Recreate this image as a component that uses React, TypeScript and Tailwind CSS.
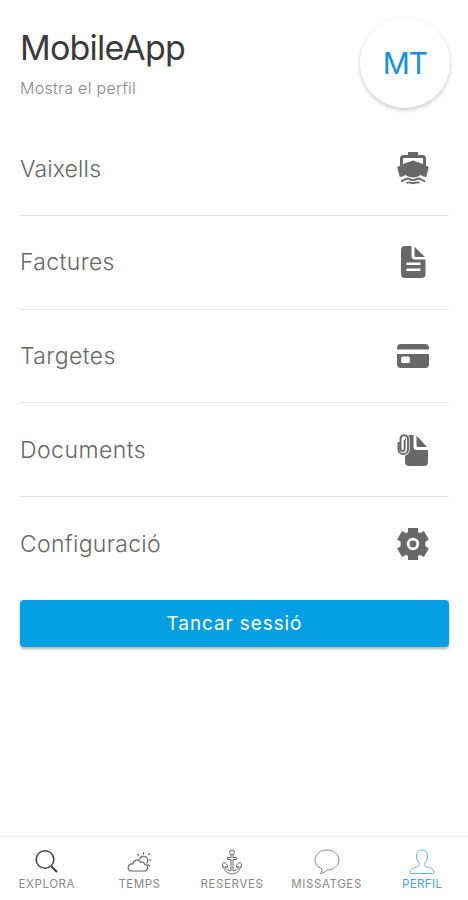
import type { ReactNode } from "react";

const menuItems: { label: string; tracking: string; icon: ReactNode }[] = [
  {
    label: "Vaixells",
    tracking: "tracking-[0.15px]",
    icon: (
      <>
        <path
          d="M11 0h10v3h4.500A3.500 3.500 0 0 1 29 6.500V13.500l2.800 1.700-2.600 9.800c-2.500 0-4-.6-5.500-2.200-4.400 3.700-11 3.700-15.400 0C6.800 24.400 5.300 25 2.800 25L.2 15.200 3 13.500V6.500A3.500 3.500 0 0 1 6.500 3H11zM6 6v6L16 8.500l10 3.500V6z"
          fillRule="evenodd"
        />
        <path
          d="M4 29c2.500.6 4-2.500 6.500-2.500 2.200 0 3.200 1.600 5.500 1.600s3.300-1.600 5.500-1.600c2.500 0 4 3.100 6.500 2.500M9.500 31c2.500-1.700 4 .2 6.500.2s4-1.900 6.500-.2"
          fill="none"
          stroke="currentColor"
          strokeWidth="1.9"
        />
      </>
    ),
  },
  {
    label: "Factures",
    tracking: "tracking-[0.35px]",
    icon: (
      <path
        d="M8 0h6.500v10a3.500 3.500 0 0 0 3.500 3.500h10.500V28a4 4 0 0 1-4 4H8a4 4 0 0 1-4-4V4a4 4 0 0 1 4-4zm9.500.7L28 11h-9a1.500 1.500 0 0 1-1.500-1.500zM9.500 16.500V19h14v-2.500zm0 6V25h14v-2.500z"
        fillRule="evenodd"
      />
    ),
  },
  {
    label: "Targetes",
    tracking: "tracking-[0.4px]",
    icon: (
      <path
        d="M4 4h24a4 4 0 0 1 4 4v1.500H0V8a4 4 0 0 1 4-4zM0 14h32v10a4 4 0 0 1-4 4H4a4 4 0 0 1-4-4zm6 2.500a2 2 0 0 0-2 2V21a2 2 0 0 0 2 2h5a2 2 0 0 0 2-2v-2.500a2 2 0 0 0-2-2z"
        fillRule="evenodd"
      />
    ),
  },
  {
    label: "Documents",
    tracking: "tracking-[0.45px]",
    icon: (
      <>
        <path d="M10 1h6.500v11.500A3.500 3.500 0 0 0 20 16h11v12a4 4 0 0 1-4 4H12a4 4 0 0 1-4-4V5z" />
        <path d="M19.500 1.500 30 13h-9a1.500 1.500 0 0 1-1.500-1.500z" />
        <path d="M1.500 8v7.500c0 6 9.500 6 9.500 0V4.500a3.800 3.800 0 0 0-7.500 0v10c0 3.500 4.200 3.500 4.200 0V6" fill="none" stroke="white" strokeWidth="3.400" />
        <path d="M1.500 8v7.500c0 6 9.500 6 9.500 0V4.500a3.800 3.800 0 0 0-7.500 0v10c0 3.500 4.200 3.500 4.200 0V6" fill="none" stroke="currentColor" strokeWidth="1.900" />
      </>
    ),
  },
  {
    label: "Configuració",
    tracking: "tracking-[0.3px]",
    icon: (
      <>
        <path
          d="M11 0h10v4l2 1.200 3.900-2.100 4.900 8.500-3.400 2.100v4.600l3.400 2.100-4.900 8.500-3.900-2.100L21 28v4H11v-4l-2-1.200-3.900 2.100-4.900-8.500 3.400-2.100v-4.600L.2 11.600l4.900-8.500L9 5.200 11 4zM16 9.800a6.200 6.200 0 1 0 0 12.400 6.200 6.200 0 0 0 0-12.400z"
          fillRule="evenodd"
        />
        <circle cx="16" cy="16" r="3.400" />
      </>
    ),
  },
];

const tabs: { label: string; icon: ReactNode; iconClass: string; labelClass: string }[] = [
  {
    label: "EXPLORA",
    iconClass: "text-[#444] -ml-0.5",
    labelClass: "text-[#888] tracking-[0.6px]",
    icon: (
      <>
        <circle cx="12" cy="10.500" r="8.800" strokeWidth="1.500" />
        <path d="m18.500 17.500 5.500 5.500" strokeWidth="2.200" />
      </>
    ),
  },
  {
    label: "TEMPS",
    iconClass: "text-[#666] -ml-0.5",
    labelClass: "text-[#888] tracking-[0.5px] -ml-0.5",
    icon: (
      <>
        <path d="M5 22h13c4.500 0 5-6 .8-6.700-.6-2-2.600-2.600-4-1.800C13 9.500 7.500 10.500 7 15c-5.500-.5-6.500 6.500-2 7z" strokeWidth="1.200" />
        <path d="M13.500 10.500a4.200 4.200 0 1 1 7 4M17.500 3v2.500m8 5.500H23m-.8-5L24 4.200M13 6.500l-1.600-1.600M22 15.500l1.800 1.700" strokeWidth="1.200" />
      </>
    ),
  },
  {
    label: "RESERVES",
    iconClass: "text-[#666] -ml-1",
    labelClass: "text-[#888] tracking-[0.6px] -ml-1",
    icon: (
      <>
        <circle cx="13" cy="3.500" r="2.500" />
        <path d="M12 6v2.500H8.500v2H12v11.300c-3-.2-5.300-1.800-5.800-4.300l2.300.8c.2-2.700-1.400-4.400-4-4.800-1.200 1.500-1.500 3-.8 4.500l1-.3C5 21.500 8.500 24.500 13 25c4.500-.5 8-3.500 8.300-7.300l1 .3c.7-1.500.4-3-.8-4.500-2.600.4-4.200 2.100-4 4.800l2.300-.8c-.5 2.500-2.800 4.100-5.800 4.300V10.500h3.500v-2H14V6" />
      </>
    ),
  },
  {
    label: "MISSATGES",
    iconClass: "text-[#888] -ml-0.5",
    labelClass: "text-[#888] tracking-[0.6px] -ml-0.5",
    icon: (
      <path d="M6.500 24.500c1.500-1.700 2-3.400 1.300-4.800C3.300 18 1 14.800 1 11 1 5.400 6.300 1 13 1s12 4.400 12 10-5.300 10-12 10c-2 2-4 3.200-6.500 3.500z" />
    ),
  },
  {
    label: "PERFIL",
    iconClass: "text-[#61afe8] ml-0.5",
    labelClass: "text-[#43a2e6] tracking-[0.4px] ml-0.5",
    icon: (
      <path d="M13 1c-3.300 0-5.500 2.200-5.500 5.500 0 4 .8 5.800 2.800 8 .5 1.700-.2 2.600-1.800 3.200C4.500 19.200 1 19.500 1 23.500c0 .8.500 1 1.500 1h21c1 0 1.500-.2 1.500-1 0-4-3.500-4.300-7.500-5.800-1.600-.6-2.300-1.500-1.800-3.200 2-2.200 2.800-4 2.800-8C18.500 3.200 16.300 1 13 1z" />
    ),
  },
];

function ProfileHeader() {
  return (
    <header className="flex h-[122px] shrink-0 justify-between pt-[18px] pr-[18px] pl-5">
      <div className="pt-[10px]">
        <h1 className="text-[34px] leading-10 tracking-[-0.8px] text-[#3a3a3a]">MobileApp</h1>
        <p className="mt-[10px] text-[16px] leading-5 font-light tracking-[0.3px] text-[#888]">Mostra el perfil</p>
      </div>
      <div className="flex size-[90px] items-center justify-center rounded-full bg-white text-[30px] tracking-[-1px] text-[#1492d8] shadow-[0_2px_4px_rgba(0,0,0,0.22)]">
        MT
      </div>
    </header>
  );
}

export default function App() {
  return (
    <div className="flex h-screen w-full flex-col overflow-hidden bg-white font-['Inter',sans-serif]">
      <ProfileHeader />
      <main className="flex-1 px-5 pr-[19px]">
        <ul>
          {menuItems.map((item) => (
            <li
              key={item.label}
              className="flex h-[93.75px] items-center justify-between border-b border-[#e2e2e2] pr-5 last:border-b-0"
            >
              <span className={`pt-px text-[23px] font-light text-[#666] ${item.tracking}`}>{item.label}</span>
              <svg viewBox="0 0 32 32" className="size-8 overflow-visible text-[#686868]" fill="currentColor">
                {item.icon}
              </svg>
            </li>
          ))}
        </ul>
        <button className="mt-[9px] flex h-[47px] w-full items-center justify-center rounded-[4px] bg-[#049fe3] pt-0.5 text-[19px] tracking-[0.9px] text-white shadow-[0_2px_3px_rgba(0,0,0,0.3)]">
          Tancar sessió
        </button>
      </main>
      <nav className="grid h-16 shrink-0 grid-cols-5 border-t border-[#eee]">
        {tabs.map((tab) => (
          <div key={tab.label} className="flex flex-col items-center pt-[12px]">
            <svg
              viewBox="0 0 26 26"
              className={`size-[26px] ${tab.iconClass}`}
              fill="none"
              stroke="currentColor"
              strokeWidth="1"
            >
              {tab.icon}
            </svg>
            <span className={`mt-px text-[11.5px] leading-4 ${tab.labelClass}`}>{tab.label}</span>
          </div>
        ))}
      </nav>
    </div>
  );
}
